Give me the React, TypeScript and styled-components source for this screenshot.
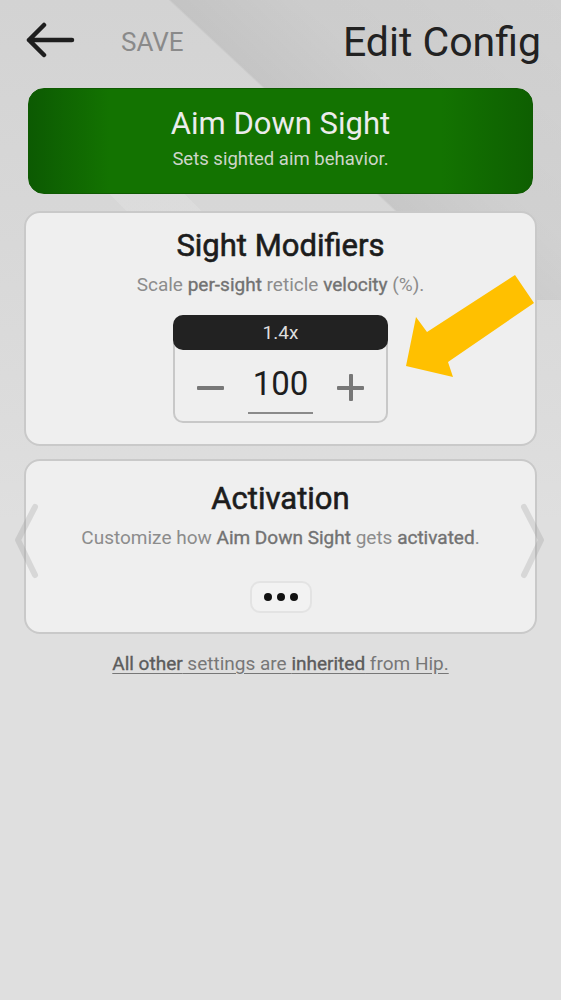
import styled, { createGlobalStyle } from "styled-components";

const GlobalStyles = createGlobalStyle`
  * {
    margin: 0;
    padding: 0;
    box-sizing: border-box;
  }
  body {
    background: #dfdfdf;
    font-family: Roboto, "Liberation Sans", sans-serif;
    color: #222;
  }
`;

function App() {
  return (
    <Page>
      <GlobalStyles />
      <Header>
        <BackButton aria-label="Back">
          <svg width="50" height="36" viewBox="0 0 50 36" fill="none">
            <path
              d="M3 18 H46 M3 18 L18 3 M3 18 L18 33"
              stroke="#1e1e1e"
              strokeWidth="4.5"
              strokeLinecap="round"
              strokeLinejoin="round"
            />
          </svg>
        </BackButton>
        <Save>SAVE</Save>
        <Title>Edit Config</Title>
      </Header>

      <Banner>
        <BannerTitle>Aim Down Sight</BannerTitle>
        <BannerSub>Sets sighted aim behavior.</BannerSub>
      </Banner>

      <Card $height={235} $pad={15}>
        <CardTitle>Sight Modifiers</CardTitle>
        <CardText>
          Scale <b>per-sight</b> reticle <b>velocity</b> (%).
        </CardText>
        <Stepper>
          <StepperHead>1.4x</StepperHead>
          <StepperRow>
            <Minus />
            <Value>100</Value>
            <Plus />
          </StepperRow>
        </Stepper>
        <Pointer width="140" height="112" viewBox="0 0 140 112">
          <polygon
            points="115,5 27,62 16,47 6,96 53,107 48,92 134,33"
            fill="#ffc000"
          />
        </Pointer>
      </Card>

      <Card $height={175} $pad={20} $gap={13}>
        <CardTitle>Activation</CardTitle>
        <CardText>
          Customize how <b>Aim Down Sight</b> gets <b>activated</b>.
        </CardText>
        <MoreButton aria-label="More">
          <Dot />
          <Dot />
          <Dot />
        </MoreButton>
        <Chevron $side="left" width="30" height="78" viewBox="0 0 30 78">
          <polyline points="23,5 6,38 23,73" />
        </Chevron>
        <Chevron $side="right" width="30" height="78" viewBox="0 0 30 78">
          <polyline points="6,5 23,38 6,73" />
        </Chevron>
      </Card>

      <Footer>
        <b>All other</b> settings are <b>inherited</b> from Hip.
      </Footer>
    </Page>
  );
}

export default App;

const Page = styled.div`
  width: 561px;
  min-height: 1000px;
  background:
    linear-gradient(223deg, rgba(0, 0, 0, 0.015) 0, rgba(0, 0, 0, 0.035) 180px, rgba(0, 0, 0, 0.075) 266px, transparent 268px) 0 0 / 561px 300px no-repeat,
    linear-gradient(45deg, transparent 0 55%, rgba(255, 255, 255, 0.12) 55% 70%, transparent 70%) 0 160px / 300px 200px no-repeat,
    linear-gradient(180deg, #d3d3d3 0, #d7d7d7 200px, #dcdcdc 420px, #dfdfdf 520px);
  padding-bottom: 40px;
`;

const Header = styled.header`
  display: flex;
  align-items: center;
  height: 88px;
  padding: 0 20px 8px 26px;
`;

const BackButton = styled.button`
  display: flex;
  background: none;
  border: none;
  cursor: pointer;
`;

const Save = styled.span`
  margin-left: 45px;
  margin-top: 4px;
  font-size: 26px;
  color: #8a8a8a;
`;

const Title = styled.h1`
  margin-left: auto;
  margin-top: 4px;
  font-size: 41px;
  font-weight: 400;
  color: #222;
`;

const Banner = styled.section`
  margin: 0 28px;
  height: 106px;
  border-radius: 16px;
  border: 1px solid #0f5a02;
  background: linear-gradient(90deg, #0c5a02 0%, #137301 16%, #137301 82%, #0e5f01 100%);
  display: flex;
  flex-direction: column;
  align-items: center;
  padding-top: 17px;
  gap: 6px;
`;

const BannerTitle = styled.h2`
  font-size: 31px;
  line-height: 36px;
  font-weight: 400;
  color: #ececec;
`;

const BannerSub = styled.p`
  font-size: 18.5px;
  line-height: 22px;
  color: #cdd6c9;
`;

const Card = styled.section<{ $height: number; $pad: number; $gap?: number }>`
  position: relative;
  margin: ${(p) => p.$gap ?? 17}px 24px 0;
  height: ${(p) => p.$height}px;
  border: 2px solid #c9c9c9;
  border-radius: 16px;
  background: #efefef;
  display: flex;
  flex-direction: column;
  align-items: center;
  padding-top: ${(p) => p.$pad}px;
`;

const CardTitle = styled.h3`
  font-size: 31px;
  line-height: 36px;
  font-weight: 400;
  color: #1c1c1c;
  -webkit-text-stroke: 0.6px #1c1c1c;
`;

const CardText = styled.p`
  margin-top: 10px;
  font-size: 19px;
  line-height: 22px;
  color: #8c8c8c;

  b {
    font-weight: 400;
    color: #727272;
    -webkit-text-stroke: 0.35px #727272;
  }
`;

const Stepper = styled.div`
  margin-top: 19px;
  width: 215px;
  height: 108px;
  border: 2px solid #c8c8c8;
  border-radius: 10px;
  display: flex;
  flex-direction: column;
`;

const StepperHead = styled.div`
  margin: -2px -2px 0;
  height: 35px;
  border-radius: 10px;
  background: #222;
  color: #dedede;
  font-size: 19px;
  display: flex;
  align-items: center;
  justify-content: center;
`;

const StepperRow = styled.div`
  flex: 1;
  display: flex;
  align-items: center;
  gap: 24px;
  padding: 0 22px;
`;

const Minus = styled.span`
  width: 27px;
  height: 4px;
  margin-top: 4px;
  background: #777;
  border-radius: 1px;
`;

const Plus = styled(Minus)`
  position: relative;

  &::after {
    content: "";
    position: absolute;
    left: 11.5px;
    top: -11.5px;
    width: 4px;
    height: 27px;
    background: #777;
    border-radius: 1px;
  }
`;

const Value = styled.span`
  align-self: flex-end;
  margin-bottom: 7px;
  width: 65px;
  text-align: center;
  font-size: 33px;
  line-height: 40px;
  padding-bottom: 8px;
  border-bottom: 2px solid #8a8a8a;
  color: #1e1e1e;
`;

const Pointer = styled.svg`
  position: absolute;
  left: 374px;
  top: 57px;
`;

const MoreButton = styled.button`
  margin-top: 32px;
  width: 62px;
  height: 32px;
  border: 2px solid #e3e3e3;
  border-radius: 10px;
  background: #f2f2f2;
  display: flex;
  align-items: center;
  justify-content: center;
  gap: 5px;
`;

const Dot = styled.span`
  width: 8px;
  height: 8px;
  border-radius: 50%;
  background: #111;
`;

const Chevron = styled.svg<{ $side: "left" | "right" }>`
  position: absolute;
  top: 41px;
  left: ${(p) => (p.$side === "left" ? "-14px" : "492px")};
  fill: none;
  stroke: rgba(150, 150, 150, 0.27);
  stroke-width: 6;
  stroke-linecap: round;
  stroke-linejoin: round;
`;

const Footer = styled.p`
  margin-top: 19px;
  text-align: center;
  font-size: 19px;
  line-height: 22px;
  color: #777;
  text-decoration: underline;
  text-underline-offset: 3px;

  b {
    font-weight: 400;
    color: #5c5c5c;
    -webkit-text-stroke: 0.35px #5c5c5c;
  }
`;
